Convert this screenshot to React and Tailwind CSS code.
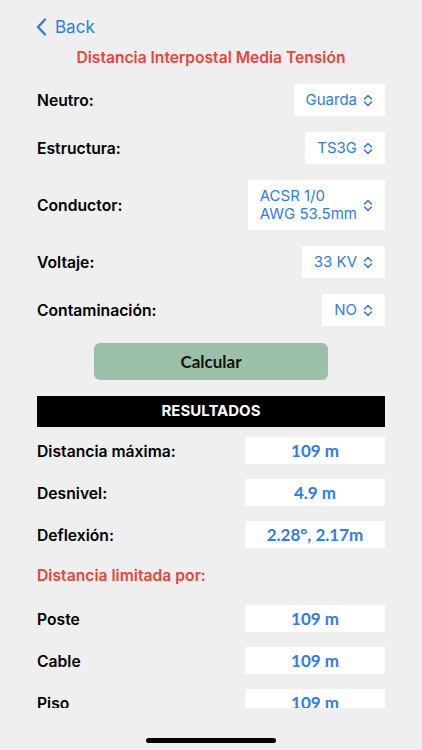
import React from 'react'

const blue = 'text-[#2f7bea]'

function UpDown() {
  return (
    <svg width="10" height="13" viewBox="0 0 10 13" fill="none" className="shrink-0">
      <path d="M1.5 5 L5 1.5 L8.5 5" stroke="#2f7bea" strokeWidth="1.6" strokeLinecap="round" strokeLinejoin="round" />
      <path d="M1.5 8 L5 11.5 L8.5 8" stroke="#2f7bea" strokeWidth="1.6" strokeLinecap="round" strokeLinejoin="round" />
    </svg>
  )
}

function Picker({ label, lines, h = 'h-[32px]' }) {
  return (
    <div className="flex items-center justify-between">
      <span className="text-[15.7px] font-semibold text-black pt-[2px]">{label}</span>
      <div className={`bg-white ${h} flex items-center gap-[6px] pl-3 pr-3`}>
        <div className={`${blue} text-[15px] leading-[18px]`}>
          {lines.map((l) => (
            <div key={l}>{l}</div>
          ))}
        </div>
        <UpDown />
      </div>
    </div>
  )
}

function Result({ label, value }) {
  return (
    <div className="flex items-center justify-between h-[27px]">
      <span className="text-[15.7px] font-semibold text-black pt-[2px]">{label}</span>
      <div
        className={`bg-white w-[140px] h-[27px] flex items-center justify-center ${blue} text-[17px] font-bold`}
        style={{ fontFamily: 'Lato, sans-serif' }}
      >
        {value}
      </div>
    </div>
  )
}

export default function App() {
  return (
    <div
      className="w-[422px] h-[750px] bg-[#efefef] flex flex-col overflow-hidden"
      style={{ fontFamily: 'Inter, "Noto Sans", sans-serif' }}
    >
      <div className="h-[708px] overflow-hidden px-[37px]">
        {/* nav */}
        <div className="h-[20px] mt-[17px] flex items-center gap-[8px] -ml-[1px]">
          <svg width="11" height="18" viewBox="0 0 11 18" fill="none">
            <path d="M9 1.5 L2 9 L9 16.5" stroke="#2f7bea" strokeWidth="2.4" strokeLinecap="round" strokeLinejoin="round" />
          </svg>
          <span className={`${blue} text-[17px] pt-[2px]`}>Back</span>
        </div>
        <div className="h-[20px] mt-[9px] text-center text-[15.6px] font-semibold text-[#e8433c]">
          Distancia Interpostal Media Tensión
        </div>

        <div className="mt-[18px] flex flex-col gap-4">
          <Picker label="Neutro:" lines={['Guarda']} />
          <Picker label="Estructura:" lines={['TS3G']} />
          <Picker label="Conductor:" lines={['ACSR 1/0', 'AWG 53.5mm']} h="h-[50px]" />
          <Picker label="Voltaje:" lines={['33 KV']} />
          <Picker label="Contaminación:" lines={['NO']} />
        </div>

        <div className="flex justify-center mt-[17px]">
          <button
            className="w-[234px] h-[37px] rounded-[6px] bg-[#9bbfa8] text-[#111] text-[17px] font-bold"
            style={{ fontFamily: 'Lato, sans-serif' }}
          >
            Calcular
          </button>
        </div>

        <div className="mt-[16px] h-[31px] bg-black text-white flex items-center justify-center text-[15px] font-bold">
          RESULTADOS
        </div>

        <div className="mt-[10px] flex flex-col gap-[15px]">
          <Result label="Distancia máxima:" value="109 m" />
          <Result label="Desnivel:" value="4.9 m" />
          <Result label="Deflexión:" value="2.28°, 2.17m" />
        </div>

        <div className="mt-[16px] h-[20px] text-[15.7px] font-semibold text-[#e8433c]">
          Distancia limitada por:
        </div>

        <div className="mt-[21px] flex flex-col gap-[15px]">
          <Result label="Poste" value="109 m" />
          <Result label="Cable" value="109 m" />
          <Result label="Piso" value="109 m" />
        </div>
      </div>
      <div className="flex justify-center mt-[30px]">
        <div className="w-[130px] h-[5px] rounded-full bg-black" />
      </div>
    </div>
  )
}
